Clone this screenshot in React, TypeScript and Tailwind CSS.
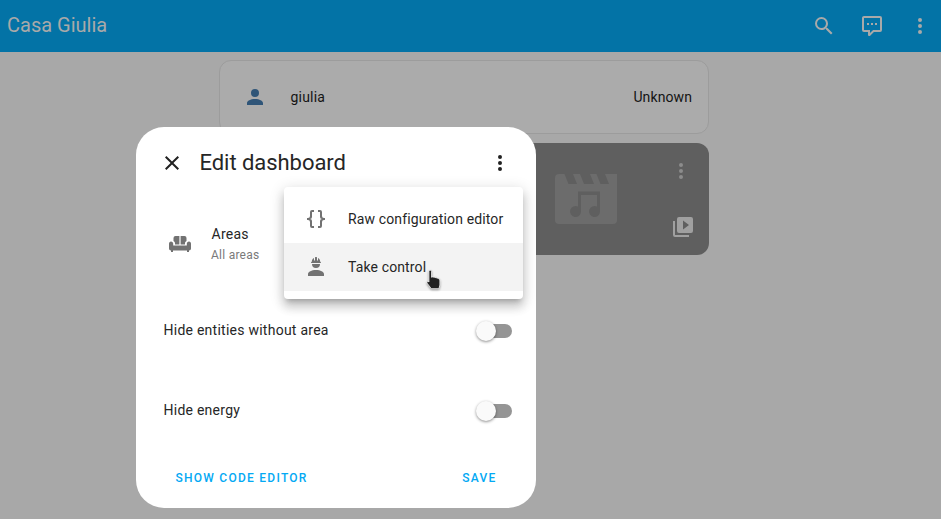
import {Fragment} from 'react';

const mdi = {
  magnify: 'M9.5,3A6.5,6.5 0 0,1 16,9.5C16,11.11 15.41,12.59 14.44,13.73L14.71,14H15.5L20.5,19L19,20.5L14,15.5V14.71L13.73,14.44C12.59,15.41 11.11,16 9.5,16A6.5,6.5 0 0,1 3,9.5A6.5,6.5 0 0,1 9.5,3M9.5,5C7,5 5,7 5,9.5C5,12 7,14 9.5,14C12,14 14,12 14,9.5C14,7 12,5 9.5,5Z',
  comment: 'M9,22A1,1 0 0,1 8,21V18H4A2,2 0 0,1 2,16V4C2,2.89 2.9,2 4,2H20A2,2 0 0,1 22,4V16A2,2 0 0,1 20,18H13.9L10.2,21.71C10,21.9 9.75,22 9.5,22V22H9M10,16V19.08L13.08,16H20V4H4V16H10M17,11H15V9H17V11M13,11H11V9H13V11M9,11H7V9H9V11Z',
  dots: 'M12,16A2,2 0 0,1 14,18A2,2 0 0,1 12,20A2,2 0 0,1 10,18A2,2 0 0,1 12,16M12,10A2,2 0 0,1 14,12A2,2 0 0,1 12,14A2,2 0 0,1 10,12A2,2 0 0,1 12,10M12,4A2,2 0 0,1 14,6A2,2 0 0,1 12,8A2,2 0 0,1 10,6A2,2 0 0,1 12,4Z',
  account: 'M12,4A4,4 0 0,1 16,8A4,4 0 0,1 12,12A4,4 0 0,1 8,8A4,4 0 0,1 12,4M12,14C16.42,14 20,15.79 20,18V20H4V18C4,15.79 7.58,14 12,14Z',
  close: 'M19,6.41L17.59,5L12,10.59L6.41,5L5,6.41L10.59,12L5,17.59L6.41,19L12,13.41L17.59,19L19,17.59L13.41,12L19,6.41Z',
  braces: 'M8,3A2,2 0 0,0 6,5V9A2,2 0 0,1 4,11H3V13H4A2,2 0 0,1 6,15V19A2,2 0 0,0 8,21H10V19H8V14A2,2 0 0,0 6,12A2,2 0 0,0 8,10V5H10V3M16,3A2,2 0 0,1 18,5V9A2,2 0 0,0 20,11H21V13H20A2,2 0 0,0 18,15V19A2,2 0 0,1 16,21H14V19H16V14A2,2 0 0,1 18,12A2,2 0 0,1 16,10V5H14V3H16Z',
  hardHat: 'M12,15C7.58,15 4,16.79 4,19V21H20V19C20,16.79 16.42,15 12,15M8,9A4,4 0 0,0 12,13A4,4 0 0,0 16,9M11.5,2C11.2,2 11,2.21 11,2.5V5.5H10V3C10,3 7.75,3.86 7.75,6.75C7.75,6.75 7,6.89 7,8H17C16.95,6.89 16.25,6.75 16.25,6.75C16.25,3.86 14,3 14,3V5.5H13V2.5C13,2.21 12.81,2 12.5,2H11.5Z',
  sofa: 'M5.5 6A2 2 0 0 1 7.5 4H11.4V12.5H7V11.5C7 10.4 6.4 9.5 5.5 9.1ZM12.6 4H16.5A2 2 0 0 1 18.5 6V9.1C17.6 9.5 17 10.4 17 11.5V12.5H12.6ZM3 9.5C4.2 9.5 5.2 10.5 5.2 11.7V13.5H18.8V11.7C18.8 10.5 19.8 9.5 21 9.5S23 10.5 23 11.7V16.5C23 17.6 22.1 18.5 21 18.5V20H19V18.5H5V20H3V18.5C1.9 18.5 1 17.6 1 16.5V11.7C1 10.5 1.9 9.5 3 9.5Z',
  playBoxes: 'M4 6H2V20A2 2 0 0 0 4 22H18V20H4V6M20 2H8A2 2 0 0 0 6 4V16A2 2 0 0 0 8 18H20A2 2 0 0 0 22 16V4A2 2 0 0 0 20 2M12 14.5V5.5L18 10Z',
};

function Icon({d, className}: {d: string; className: string}) {
  return (
    <svg viewBox="0 0 24 24" className={className} fill="currentColor">
      <path d={d} />
    </svg>
  );
}

function SwitchRow({label, className}: {label: string; className: string}) {
  return (
    <div className={`flex items-center justify-between pl-[27.5px] pr-6 ${className}`}>
      <span className="-mt-px text-[14px] tracking-[0.25px] text-[#262626]">{label}</span>
      <div className="relative h-3.5 w-[35px] rounded-full bg-[#959595]">
        <div className="absolute -left-[1px] -top-[3px] h-5 w-5 rounded-full bg-[#fafafa] shadow-[0_1px_3px_rgba(0,0,0,0.45)]" />
      </div>
    </div>
  );
}

export default function App() {
  return (
    <div className="relative h-[519px] w-[941px] overflow-hidden bg-[#a8a8a8] font-['Roboto',sans-serif]">
      {/* header */}
      <header className="flex h-[52px] items-center bg-[#0373a6] pl-[7px] pr-[9px] text-[#a9a9a9]">
        <h1 className="-mt-[2px] flex-1 text-[20px] leading-[48px]">Casa Giulia</h1>
        <Icon d={mdi.magnify} className="h-6 w-6" />
        <Icon d={mdi.comment} className="ml-6 h-6 w-6" />
        <Icon d={mdi.dots} className="ml-6 h-6 w-6" />
      </header>

      {/* dashboard behind the dialog */}
      <main className="ml-[218.5px] flex w-[490.5px] flex-col gap-[9px] pt-2">
        <div className="flex h-[74px] items-center rounded-xl border border-[#9c9c9c] bg-[#ababab] pl-[23px] pr-4">
          <Icon d={mdi.account} className="h-6 w-6 text-[#2f5578]" />
          <span className="ml-[24px] flex-1 text-[14px] tracking-[0.2px] text-[#141414]">giulia</span>
          <span className="text-[14px] tracking-[0.1px] text-[#141414]">Unknown</span>
        </div>
        <div className="relative h-[112px] rounded-xl bg-[#5f5f5f]">
          <svg viewBox="0 0 62 50" className="absolute left-[336.5px] top-[31px] h-[50px] w-[62px]">
            <path
              fill="#6c6c6c"
              fillRule="evenodd"
              d="M4 0H62V46A4 4 0 0 1 58 50H4A4 4 0 0 1 0 46V4A4 4 0 0 1 4 0ZM9.5 0H18L22 10H13.5ZM25 0H35L39 10H29ZM41.5 0H50L54 10H45.5Z"
            />
            <path
              fill="#5f5f5f"
              d="M23 17.5H45V37.5A5.5 5.5 0 1 1 42 32.6V21H26V37.5A5.5 5.5 0 1 1 23 32.6Z"
            />
          </svg>
          <Icon d={mdi.dots} className="absolute right-4 top-4 h-6 w-6 text-[#8c8c8c]" />
          <Icon d={mdi.playBoxes} className="absolute bottom-4 right-[14px] h-6 w-6 text-[#a0a0a0]" />
        </div>
      </main>

      {/* dialog */}
      <section className="absolute left-[136px] top-[127px] flex h-[381px] w-[400px] flex-col rounded-[28px] bg-white">
        <div className="flex h-[72px] items-center pl-6 pr-6">
          <Icon d={mdi.close} className="h-6 w-6 text-[#212121]" />
          <h2 className="-mt-[2px] ml-[15.5px] flex-1 text-[22px] tracking-[-0.05px] text-[#262626]">Edit dashboard</h2>
          <Icon d={mdi.dots} className="h-6 w-6 text-[#212121]" />
        </div>
        <div className="mt-[13px] flex h-[64px] items-center pl-[32px]">
          <Icon d={mdi.sofa} className="h-6 w-6 text-[#727272]" />
          <div className="ml-[19.5px]">
            <div className="text-[14px] leading-5 tracking-[0.25px] text-[#262626]">Areas</div>
            <div className="mt-px -ml-[0.5px] text-[12px] leading-5 tracking-[0.25px] text-[#7a7a7a]">All areas</div>
          </div>
        </div>
        <SwitchRow label="Hide entities without area" className="mt-[42px] h-[26px]" />
        <SwitchRow label="Hide energy" className="mt-[54px] h-[26px]" />
        <div className="mt-auto flex justify-between pb-[21px] pl-[39.5px] pr-[39.5px] text-[12px] font-medium leading-[18px] tracking-[1.25px] text-[#03a9f4]">
          <span>SHOW CODE EDITOR</span>
          <span>SAVE</span>
        </div>
      </section>

      {/* overflow menu */}
      <div className="absolute left-[284px] top-[187px] w-[239px] rounded bg-white py-2 shadow-[0_5px_5px_-3px_rgba(0,0,0,0.2),0_8px_10px_1px_rgba(0,0,0,0.14),0_3px_14px_2px_rgba(0,0,0,0.12)]">
        {[
          {icon: mdi.braces, label: 'Raw configuration editor', bg: ''},
          {icon: mdi.hardHat, label: 'Take control', bg: 'bg-[#f3f3f3]'},
        ].map(item => (
          <Fragment key={item.label}>
            <div className={`flex h-12 items-center pl-5 ${item.bg}`}>
              <Icon d={item.icon} className="h-6 w-6 text-[#727272]" />
              <span className="ml-5 text-[14px] tracking-[0.125px] text-[#262626]">{item.label}</span>
            </div>
          </Fragment>
        ))}
      </div>

      {/* mouse cursor */}
      <svg viewBox="0 0 16 22" className="absolute left-[426px] top-[270px] h-[20px] w-[15px] drop-shadow-[0_1px_1px_rgba(0,0,0,0.4)]">
        <path
          d="M3 1.5C3 .7 3.6.2 4.4.2S5.8.7 5.8 1.5V8L7 7.6 9 8 11 8.5 13 9.2C14.4 9.8 15 10.6 15 12V16.5L14 20.5H5.5L1 14.5C.6 13.8.8 13 1.4 12.7 2 12.4 2.6 12.6 3 13.2Z"
          fill="#222"
          stroke="#fff"
          strokeWidth=".8"
        />
      </svg>
    </div>
  );
}
